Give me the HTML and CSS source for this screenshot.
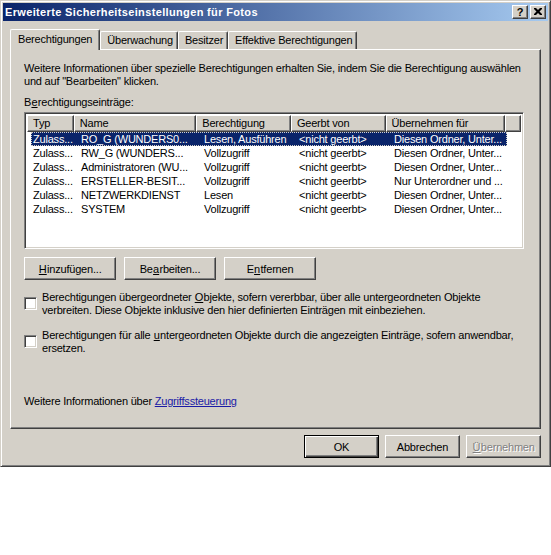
FILE: index.html
```html
<!DOCTYPE html>
<html lang="de">
<head>
<meta charset="utf-8">
<title>Erweiterte Sicherheitseinstellungen für Fotos</title>
<link rel="stylesheet" href="styles.css">
</head>
<body>
<div class="window">
  <div class="titlebar">
    <span class="title">Erweiterte Sicherheitseinstellungen für Fotos</span>
    <div class="tbtns">
      <span class="tbtn help">?</span>
      <span class="tbtn close"><svg width="8" height="7" viewBox="0 0 8 7"><path d="M0 0h2l2 2l2-2h2v1l-2.5 2.5l2.5 2.5v1h-2l-2-2l-2 2h-2v-1l2.5-2.5l-2.5-2.5z" fill="#000"/></svg></span>
    </div>
  </div>
  <div class="content">
    <div class="tabs">
      <div class="tab active">Berechtigungen</div>
      <div class="tab">Überwachung</div>
      <div class="tab">Besitzer</div>
      <div class="tab">Effektive Berechtigungen</div>
    </div>
    <div class="panel">
      <p class="info">Weitere Informationen über spezielle Berechtigungen erhalten Sie, indem Sie die Berechtigung auswählen<br>und auf "Bearbeiten" klicken.</p>
      <div class="label">B<u>e</u>rechtigungseinträge:</div>
      <div class="listview">
        <div class="lvhead">
          <div class="hc c1">Typ</div>
          <div class="hc c2">Name</div>
          <div class="hc c3">Berechtigung</div>
          <div class="hc c4">Geerbt von</div>
          <div class="hc c5">Übernehmen für</div>
          <div class="hc c6"></div>
        </div>
        <div class="lvrow sel">
          <div class="cell c1">Zulass...</div>
          <div class="cell c2">RO_G (WUNDERS0...</div>
          <div class="cell c3">Lesen, Ausführen</div>
          <div class="cell c4">&lt;nicht geerbt&gt;</div>
          <div class="cell c5">Diesen Ordner, Unter...</div>
        </div>
        <div class="lvrow">
          <div class="cell c1">Zulass...</div>
          <div class="cell c2">RW_G (WUNDERS...</div>
          <div class="cell c3">Vollzugriff</div>
          <div class="cell c4">&lt;nicht geerbt&gt;</div>
          <div class="cell c5">Diesen Ordner, Unter...</div>
        </div>
        <div class="lvrow">
          <div class="cell c1">Zulass...</div>
          <div class="cell c2">Administratoren (WU...</div>
          <div class="cell c3">Vollzugriff</div>
          <div class="cell c4">&lt;nicht geerbt&gt;</div>
          <div class="cell c5">Diesen Ordner, Unter...</div>
        </div>
        <div class="lvrow">
          <div class="cell c1">Zulass...</div>
          <div class="cell c2">ERSTELLER-BESIT...</div>
          <div class="cell c3">Vollzugriff</div>
          <div class="cell c4">&lt;nicht geerbt&gt;</div>
          <div class="cell c5">Nur Unterordner und ...</div>
        </div>
        <div class="lvrow">
          <div class="cell c1">Zulass...</div>
          <div class="cell c2">NETZWERKDIENST</div>
          <div class="cell c3">Lesen</div>
          <div class="cell c4">&lt;nicht geerbt&gt;</div>
          <div class="cell c5">Diesen Ordner, Unter...</div>
        </div>
        <div class="lvrow">
          <div class="cell c1">Zulass...</div>
          <div class="cell c2">SYSTEM</div>
          <div class="cell c3">Vollzugriff</div>
          <div class="cell c4">&lt;nicht geerbt&gt;</div>
          <div class="cell c5">Diesen Ordner, Unter...</div>
        </div>
      </div>
      <div class="btnrow">
        <button class="btn"><u>H</u>inzufügen...</button>
        <button class="btn">Be<u>a</u>rbeiten...</button>
        <button class="btn">E<u>n</u>tfernen</button>
      </div>
      <div class="check c-first">
        <span class="box"></span>
        <span class="ctext">Berechtigungen übergeordneter <u>O</u>bjekte, sofern vererbbar, über alle untergeordneten Objekte verbreiten. Diese Objekte inklusive den hier definierten Einträgen mit einbeziehen.</span>
      </div>
      <div class="check c-second">
        <span class="box"></span>
        <span class="ctext">Berechtigungen für alle <u>u</u>ntergeordneten Objekte durch die angezeigten Einträge, sofern anwendbar, ersetzen.</span>
      </div>
      <div class="more">Weitere Informationen über <a href="#">Zugriffssteuerung</a></div>
    </div>
    <div class="footer">
      <button class="btn fbtn default">OK</button>
      <button class="btn fbtn">Abbrechen</button>
      <button class="btn fbtn disabled"><u>Ü</u>bernehmen</button>
    </div>
  </div>
</div>
</body>
</html>
```
FILE: styles.css
```css
* { box-sizing: border-box; }
html, body {
  margin: 0;
  padding: 0;
  background: #ffffff;
}
body {
  font-family: "Liberation Sans", Arial, sans-serif;
  font-size: 11px;
  letter-spacing: -0.2px;
  color: #000;
}
u {
  letter-spacing: 0;
  padding: 0 0.3px;
}
.window {
  width: 551px;
  height: 467px;
  background: #d4d0c8;
  border: 1px solid;
  border-color: #d4d0c8 #404040 #404040 #d4d0c8;
  box-shadow: inset 1px 1px 0 #ffffff, inset -1px -1px 0 #808080;
  padding: 2px;
  display: flex;
  flex-direction: column;
}
.titlebar {
  height: 18px;
  background: linear-gradient(to right, #0a246a, #a6caf0);
  display: flex;
  align-items: center;
  justify-content: space-between;
  padding: 0 2px 0 2px;
}
.title {
  color: #fff;
  font-weight: bold;
  font-size: 11px;
  letter-spacing: 0.35px;
  line-height: 14px;
}
.tbtns {
  display: flex;
  gap: 2px;
}
.tbtn {
  width: 16px;
  height: 14px;
  background: #d4d0c8;
  border: 1px solid;
  border-color: #ffffff #404040 #404040 #ffffff;
  box-shadow: inset -1px -1px 0 #808080;
  display: flex;
  align-items: center;
  justify-content: center;
  font-weight: bold;
  font-size: 11px;
  letter-spacing: 0;
  line-height: 12px;
}
.tbtn.help { padding-bottom: 1px; }
.tbtn.close svg { display: block; margin-bottom: 1px; }
.content {
  flex: 1;
  padding: 8px 7px 0 7px;
  display: flex;
  flex-direction: column;
}
.tabs {
  display: flex;
  align-items: flex-end;
  height: 20px;
  position: relative;
  z-index: 2;
}
.tab {
  height: 18px;
  padding: 0 4px 0 6px;
  line-height: 16px;
  border: 1px solid;
  border-color: #ffffff #404040 transparent #ffffff;
  border-bottom: 0;
  box-shadow: inset -1px 0 0 #808080;
  border-radius: 2px 2px 0 0;
  background: #d4d0c8;
  white-space: nowrap;
}
.tab.active {
  height: 21px;
  margin-bottom: -1px;
  padding: 0 7px 0 7px;
  line-height: 18px;
}
.panel {
  width: 531px;
  height: 380px;
  border: 1px solid;
  border-color: #ffffff #404040 #404040 #ffffff;
  box-shadow: inset -1px -1px 0 #808080;
  padding: 12px 13px 0 13px;
  display: flex;
  flex-direction: column;
}
.info {
  margin: 0;
  line-height: 13px;
  white-space: nowrap;
}
.label {
  margin-top: 8px;
  line-height: 13px;
}
.listview {
  margin-top: 3px;
  width: 500px;
  height: 137px;
  background: #fff;
  border: 1px solid;
  border-color: #808080 #ffffff #ffffff #808080;
  box-shadow: inset 1px 1px 0 #404040, inset -1px -1px 0 #d4d0c8;
  padding: 2px;
}
.lvhead {
  display: flex;
  height: 17px;
}
.hc {
  height: 17px;
  background: #d4d0c8;
  border: 1px solid;
  border-color: #ffffff #404040 #404040 #ffffff;
  box-shadow: inset -1px -1px 0 #808080;
  padding-left: 5px;
  line-height: 15px;
  white-space: nowrap;
  overflow: hidden;
}
.hc.c1 { width: 47px; }
.hc.c2 { width: 123px; }
.hc.c3 { width: 95px; }
.hc.c4 { width: 95px; }
.hc.c5 { width: 120px; }
.hc.c6 { width: 16px; }
.lvrow {
  display: flex;
  height: 14px;
  line-height: 14px;
  margin-left: 4px;
  width: 476px;
  white-space: nowrap;
}
.lvrow.sel {
  background: #0a246a;
  color: #fff;
  outline: 1px dotted #d4d0c8;
  outline-offset: -1px;
}
.cell {
  overflow: hidden;
  padding-left: 7px;
}
.cell.c1 { width: 43px; padding-left: 2px; }
.cell.c2 { width: 123px; }
.cell.c3 { width: 95px; }
.cell.c4 { width: 95px; }
.cell.c5 { width: 120px; }
.btnrow {
  margin-top: 8px;
  display: flex;
  gap: 8px;
}
.btn {
  font-family: "Liberation Sans", Arial, sans-serif;
  font-size: 11px;
  letter-spacing: -0.2px;
  color: #000;
  width: 92px;
  height: 23px;
  background: #d4d0c8;
  border: 1px solid;
  border-color: #ffffff #404040 #404040 #ffffff;
  box-shadow: inset -1px -1px 0 #808080;
  padding: 0;
  margin: 0;
}
.check {
  display: flex;
  align-items: flex-start;
}
.c-first { margin-top: 11px; }
.c-second { margin-top: 12px; }
.box {
  flex: none;
  width: 13px;
  height: 13px;
  margin-top: 6px;
  margin-right: 5px;
  background: #fff;
  border: 1px solid;
  border-color: #808080 #ffffff #ffffff #808080;
  box-shadow: inset 1px 1px 0 #404040, inset -1px -1px 0 #d4d0c8;
}
.ctext {
  line-height: 13px;
  width: 480px;
}
.more {
  margin-top: auto;
  margin-bottom: 20px;
  line-height: 13px;
}
.more a {
  color: #1a1aa6;
  text-decoration: underline;
}
.footer {
  display: flex;
  justify-content: flex-end;
  gap: 6px;
  margin-top: 6px;
}
.fbtn {
  width: 75px;
}
.fbtn.default {
  border: 1px solid #000;
  box-shadow: inset 1px 1px 0 #ffffff, inset -1px -1px 0 #404040, inset -2px -2px 0 #808080;
}
.fbtn.disabled {
  color: #808080;
  text-shadow: 1px 1px 0 #ffffff;
}
```
